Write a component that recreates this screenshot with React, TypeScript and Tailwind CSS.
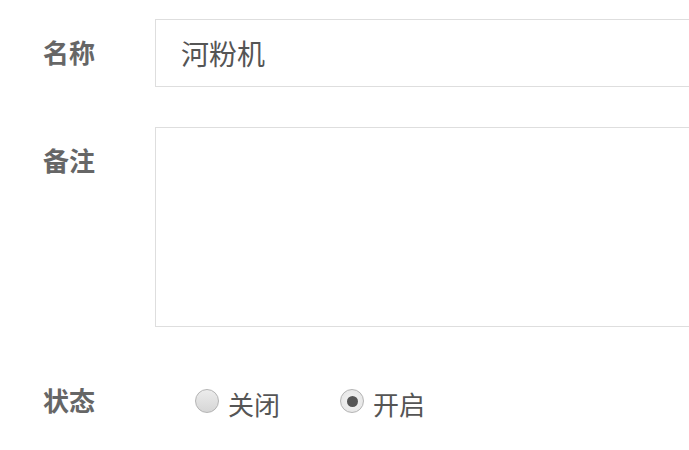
import { useState } from "react";

const font = {
  fontFamily: '"Noto Sans CJK SC", "Noto Sans", sans-serif',
};

function Radio({ checked, label, onClick }: { checked: boolean; label: string; onClick: () => void }) {
  return (
    <label className="flex items-center cursor-pointer" onClick={onClick}>
      <span
        className={
          "flex items-center justify-center w-[24px] h-[24px] rounded-full border border-[#b4b4b4] " +
          (checked
            ? "bg-[radial-gradient(circle,#f4f4f4_0%,#e2e2e2_100%)]"
            : "bg-[linear-gradient(#ececec,#d6d6d6)]")
        }
      >
        {checked && <span className="block w-[11px] h-[11px] rounded-full bg-[#555]" />}
      </span>
      <span className="ml-[9px] mt-[5px] text-[26px] leading-none text-[#555]">{label}</span>
    </label>
  );
}

export default function App() {
  const [name, setName] = useState("河粉机");
  const [note, setNote] = useState("");
  const [status, setStatus] = useState(1);

  return (
    <div className="h-screen w-full overflow-hidden bg-white pt-[19px] pl-[43px]" style={font}>
      <div className="flex mb-[40px]">
        <div className="w-[112px] shrink-0 h-[68px] leading-[66px] text-[26px] font-bold text-[#666]">名称</div>
        <input
          value={name}
          onChange={(e) => setName(e.target.value)}
          className="w-[620px] shrink-0 h-[68px] border border-[#dedede] pl-[25px] text-[28px] text-[#555] outline-none"
          style={font}
        />
      </div>
      <div className="flex mb-[40px]">
        <div className="w-[112px] shrink-0 h-[68px] leading-[66px] text-[26px] font-bold text-[#666]">备注</div>
        <textarea
          value={note}
          onChange={(e) => setNote(e.target.value)}
          className="w-[620px] shrink-0 h-[200px] border border-[#dedede] resize-none outline-none"
        />
      </div>
      <div className="flex">
        <div className="w-[112px] shrink-0 h-[68px] leading-[66px] text-[26px] font-bold text-[#666]">状态</div>
        <div className="flex items-center h-[68px] pl-[40px] gap-[60px]">
          <Radio checked={status === 0} label="关闭" onClick={() => setStatus(0)} />
          <Radio checked={status === 1} label="开启" onClick={() => setStatus(1)} />
        </div>
      </div>
    </div>
  );
}
